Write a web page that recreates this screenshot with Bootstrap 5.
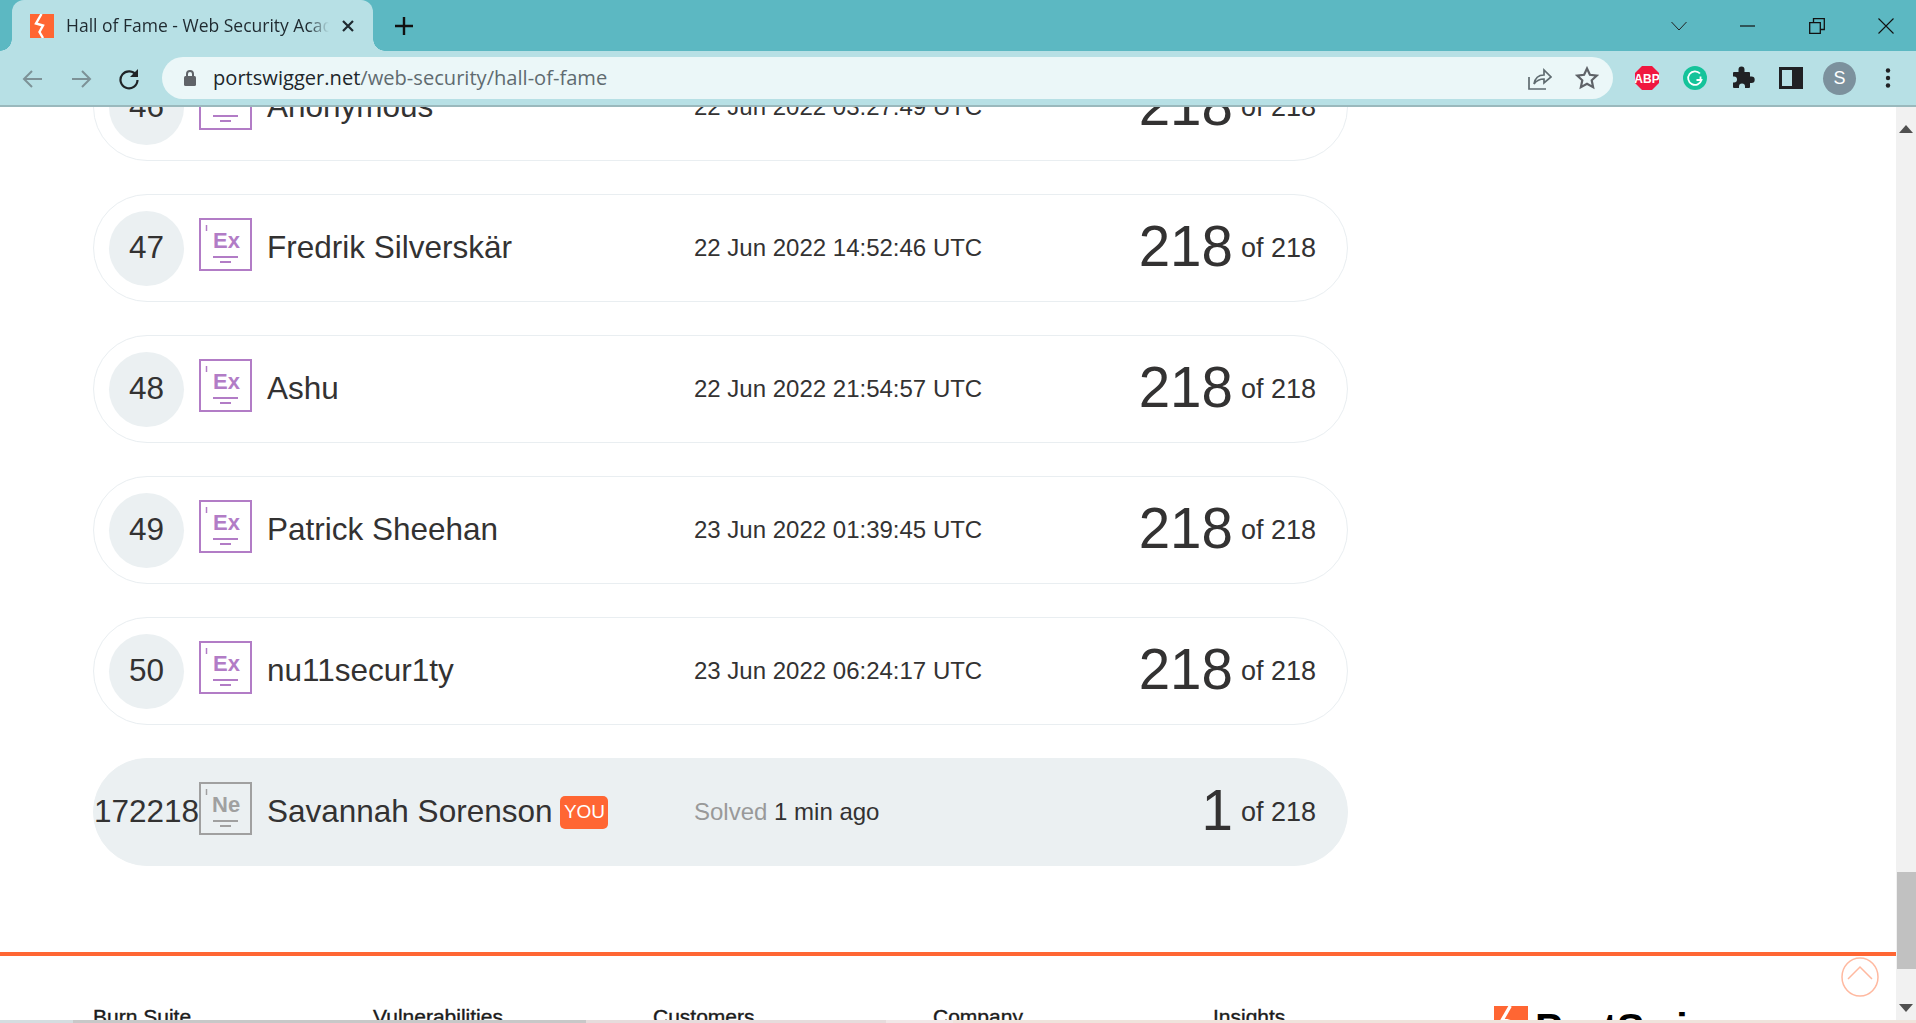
<!DOCTYPE html>
<html lang="en">

<head>
    <meta charset="UTF-8">
    <meta name="viewport" content="width=device-width, initial-scale=1.0">
    <title>Hall of Fame - Web Security Academy</title>
    <link href="https://cdn.jsdelivr.net/npm/bootstrap@5.3.3/dist/css/bootstrap.min.css" rel="stylesheet">
    <style>
        html, body { height: 100%; }
        body { overflow: hidden; background: #fff; color: #333232; font-family: "Liberation Sans", Arial, sans-serif; }

        /* browser chrome */
        .tabstrip { height: 51px; background: #5cb8c2; padding-left: 12px; font-family: "Open Sans", sans-serif; }
        .tab-item { width: 361px; height: 51px; background: #b7e0e5; border-radius: 12px 12px 0 0; padding-left: 18px; color: #1f2a30; }
        .tab-item::before, .tab-item::after { content: ""; position: absolute; bottom: 0; width: 12px; height: 12px; }
        .tab-item::before { left: -12px; background: radial-gradient(circle at 0 0, transparent 11.5px, #b7e0e5 12px); }
        .tab-item::after { right: -12px; background: radial-gradient(circle at 100% 0, transparent 11.5px, #b7e0e5 12px); }
        .tab-title { width: 263px; margin-left: 12px; font-size: 17.5px; white-space: nowrap; overflow: hidden; -webkit-mask-image: linear-gradient(90deg, #000 92%, transparent); mask-image: linear-gradient(90deg, #000 92%, transparent); }
        .tab-close { margin-left: 12px; }
        .newtab { margin-left: 22px; }
        .win-btns { margin-left: auto; padding-right: 22px; gap: 53px; }
        .toolbar { height: 56px; background: #b7e0e5; border-bottom: 2px solid #9ab9bd; padding: 6px 0 6px 22px; }
        .tool-ic { width: 48px; }
        .tool-ic-last { width: 44px; }
        .omnibox { width: 1451px; height: 42px; background: #ebf7f8; border-radius: 21px; padding: 0 14px 0 21px; font-family: "Open Sans", sans-serif; font-size: 20.1px; color: #5f6b70; }
        .url-host { color: #20262a; }
        .url-text { margin-left: 16px; white-space: nowrap; }
        .omni-right { margin-left: auto; gap: 23px; }
        .ext-bar { padding-left: 22px; gap: 24px; }
        .avatar-s { width: 33px; height: 33px; background: #7c919d; color: #fff; font-size: 18px; margin-left: -4px; margin-right: -4px; }

        /* page */
        .page-area { min-height: 0; }
        .page-scroll { min-width: 0; overflow: hidden; }
        .rank-list { margin-top: -54px; padding: 0 548px 0 93px; gap: 33px; }
        .rank-row { height: 108px; border: 1px solid #e9eef1; border-radius: 54px; padding-left: 15px; padding-right: 31px; }
        .rank-row.is-you { background: #ebf0f2; border-color: #ebf0f2; }
        .rank-num { width: 75px; height: 75px; background: #ebf0f2; font-size: 31.5px; white-space: nowrap; }
        .el-box { width: 53px; height: 53px; margin-left: 15px; margin-bottom: 8px; }
        .el-box rect, .el-box line { fill: none; stroke: #b27cc6; stroke-width: 2; }
        .el-box text { fill: #b27cc6; font: 700 22px "Liberation Sans", Arial, sans-serif; }
        .el-box .el-tick { stroke-width: 1.5; }
        .el-box.el-new rect, .el-box.el-new line { stroke: #a0a0a0; }
        .el-box.el-new text { fill: #a0a0a0; }
        .player-col { width: 442px; padding-left: 15px; font-size: 31.5px; white-space: nowrap; }
        .you-tag { background: #ff6633; color: #fff; font-size: 19px; width: 48px; height: 33px; margin-left: 8px; border-radius: 5px; }
        .when-col { font-size: 24px; white-space: nowrap; }
        .when-muted { color: #999; }
        .score-col { margin-left: auto; white-space: nowrap; }
        .score-big { font-size: 56.5px; line-height: 1; margin-right: 8px; margin-bottom: 2px; }
        .score-of { font-size: 27px; }

        .site-footer { margin-top: 86px; border-top: 4px solid #ff6633; padding: 49px 0 0 93px; }
        .foot-col { width: 280px; font-size: 21px; line-height: 24px; color: #1c1c1c; -webkit-text-stroke: .4px #1c1c1c; }
        .foot-logo { margin-left: 1px; margin-top: 1px; gap: 7px; color: #000; font-size: 41px; line-height: 44px; font-weight: 700; }

        .to-top { position: absolute; right: 37px; top: 850px; }

        .scroll-track { width: 20px; background: #f1f1f1; }
        .scroll-thumb { width: 19px; height: 97px; margin-left: 1px; background: #c1c1c1; margin-top: auto; }
        .scroll-btm { height: 51px; padding-bottom: 8px; }
        .scroll-top { padding-top: 9px; }

        .under-strip { height: 3px; background: #efe3dc; }
        .strip-a { width: 73px; background: #d5dde0; }
        .strip-b { width: 513px; background: #c8c8c8; }
        .strip-c { width: 300px; background: #e6dcdc; }
        .strip-d { width: 67px; background: #f1e8e8; }
    </style>
</head>

<body class="d-flex flex-column">

    <!-- title bar -->
    <div class="tabstrip d-flex align-items-center flex-shrink-0">
        <div class="tab-item position-relative d-flex align-items-center">
            <svg width="24" height="24" viewBox="0 0 24 24"><rect width="24" height="24" fill="#ff6633"/><path d="M11.5 0 6 9.5l7 2-3.5 6.5 3.5 6" fill="none" stroke="#fff" stroke-width="2.4"/></svg>
            <span class="tab-title">Hall of Fame - Web Security Academy</span>
            <svg class="tab-close" width="14" height="14" viewBox="0 0 14 14"><path d="M2 2l10 10M12 2 2 12" stroke="#1f2a30" stroke-width="2.2"/></svg>
        </div>
        <svg class="newtab" width="18" height="18" viewBox="0 0 18 18"><path d="M9 0v18M0 9h18" stroke="#111" stroke-width="2.4"/></svg>
        <div class="win-btns d-flex align-items-center">
            <svg width="16" height="10" viewBox="0 0 16 10"><path d="M.5 1 8 9l7.500-8" fill="none" stroke="#222" stroke-width="1"/></svg>
            <svg width="16" height="16" viewBox="0 0 16 16"><path d="M0 8h15" stroke="#111" stroke-width="1.2"/></svg>
            <svg width="16" height="16" viewBox="0 0 16 16"><path d="M.7 4.700h10.600v10.600H.7zM4.500 4.500V.7h10.800v10.800h-4" fill="none" stroke="#111" stroke-width="1.3"/></svg>
            <svg width="16" height="16" viewBox="0 0 16 16"><path d="M.5.500l15 15M15.500.500l-15 15" stroke="#111" stroke-width="1.1"/></svg>
        </div>
    </div>

    <!-- toolbar -->
    <div class="toolbar d-flex align-items-center flex-shrink-0">
        <div class="tool-ic"><svg width="22" height="20" viewBox="0 0 22 20"><path d="M20 10H3M10 2l-8 8 8 8" fill="none" stroke="#7d9297" stroke-width="2"/></svg></div>
        <div class="tool-ic"><svg width="22" height="20" viewBox="0 0 22 20"><path d="M2 10h17M12 2l8 8-8 8" fill="none" stroke="#7d9297" stroke-width="2"/></svg></div>
        <div class="tool-ic-last"><svg width="22" height="22" viewBox="0 0 22 22"><path d="M18.300 7.500A8.500 8.500 0 1 0 19.500 12" fill="none" stroke="#1f2326" stroke-width="2.200"/><path d="M20 1v8h-8z" fill="#1f2326"/></svg></div>
        <div class="omnibox d-flex align-items-center">
            <svg width="14" height="18" viewBox="0 0 14 18"><path d="M4 8V5a3 3 0 0 1 6 0v3" fill="none" stroke="#5f6368" stroke-width="2"/><rect x="1" y="7" width="12" height="10" rx="1.500" fill="#5f6368"/></svg>
            <span class="url-text"><span class="url-host">portswigger.net</span>/web-security/hall-of-fame</span>
            <div class="omni-right d-flex align-items-center">
                <svg width="24" height="24" viewBox="0 0 24 24"><path d="M1 11v12h17M6 18c1-6 5-9 10-9V4l7 7-7 6v-4c-4 0-7 1-10 5z" fill="none" stroke="#5f6b70" stroke-width="1.700"/></svg>
                <svg width="24" height="24" viewBox="0 0 24 24"><path d="m12 2.500 2.900 6.300 6.900.8-5.100 4.700 1.400 6.800-6.100-3.400-6.100 3.400 1.400-6.800-5.100-4.700 6.900-.8z" fill="none" stroke="#5f6368" stroke-width="2.200"/></svg>
            </div>
        </div>
        <div class="ext-bar d-flex align-items-center">
            <svg width="24" height="24" viewBox="0 0 24 24"><path d="M7 0h10l7 7v10l-7 7H7l-7-7V7z" fill="#f0173f"/><text x="12" y="16.500" text-anchor="middle" font-family="Liberation Sans, sans-serif" font-weight="700" font-size="12" fill="#fff">ABP</text></svg>
            <svg width="24" height="24" viewBox="0 0 24 24"><circle cx="12" cy="12" r="12" fill="#15c39a"/><path d="M17 7.500a6.800 6.800 0 1 0 1.500 6.500h-5" fill="none" stroke="#fff" stroke-width="1.800"/><path d="M17.500 10.500v3.500" stroke="#fff" stroke-width="1.800"/></svg>
            <svg width="24" height="24" viewBox="0 0 24 24"><path d="M7.500 3.500a3 3 0 0 1 6 0V6H18a1 1 0 0 1 1 1v3.500h1.500a3.200 3.200 0 0 1 0 6.400H19V21a1 1 0 0 1-1 1h-4v-1.500a3 3 0 0 0-6 0V22H3a1 1 0 0 1-1-1v-4.500h1a3 3 0 0 0 0-6H2V7a1 1 0 0 1 1-1h4.500z" fill="#202124"/></svg>
            <svg width="24" height="24" viewBox="0 0 24 24"><path d="M1.500 2.500h21v19h-21z" fill="none" stroke="#202124" stroke-width="3"/><path d="M13 2.500h9.500v19H13z" fill="#202124"/></svg>
            <div class="avatar-s rounded-circle d-flex align-items-center justify-content-center">S</div>
            <svg width="24" height="24" viewBox="0 0 24 24"><circle cx="12" cy="4.500" r="2.200" fill="#202124"/><circle cx="12" cy="12" r="2.200" fill="#202124"/><circle cx="12" cy="19.500" r="2.200" fill="#202124"/></svg>
        </div>
    </div>

    <!-- page -->
    <div class="page-area d-flex flex-grow-1 position-relative">
        <div class="page-scroll flex-grow-1">
            <div class="rank-list d-flex flex-column">

                <div class="rank-row d-flex align-items-center">
                    <div class="rank-num rounded-circle d-flex align-items-center justify-content-center flex-shrink-0">46</div>
                    <svg class="el-box flex-shrink-0" viewBox="0 0 53 53"><rect x="1" y="1" width="51" height="51"/><line class="el-tick" x1="7.500" y1="7" x2="7.500" y2="13"/><text x="14" y="30">Ex</text><line x1="14" y1="39" x2="39" y2="39"/><line x1="21" y1="44" x2="32" y2="44"/></svg>
                    <div class="player-col d-flex align-items-center">Anonymous</div>
                    <div class="when-col">22 Jun 2022 03:27:49 UTC</div>
                    <div class="score-col d-flex align-items-center"><span class="score-big">218</span><span class="score-of">of 218</span></div>
                </div>

                <div class="rank-row d-flex align-items-center">
                    <div class="rank-num rounded-circle d-flex align-items-center justify-content-center flex-shrink-0">47</div>
                    <svg class="el-box flex-shrink-0" viewBox="0 0 53 53"><rect x="1" y="1" width="51" height="51"/><line class="el-tick" x1="7.500" y1="7" x2="7.500" y2="13"/><text x="14" y="30">Ex</text><line x1="14" y1="39" x2="39" y2="39"/><line x1="21" y1="44" x2="32" y2="44"/></svg>
                    <div class="player-col d-flex align-items-center">Fredrik Silverskär</div>
                    <div class="when-col">22 Jun 2022 14:52:46 UTC</div>
                    <div class="score-col d-flex align-items-center"><span class="score-big">218</span><span class="score-of">of 218</span></div>
                </div>

                <div class="rank-row d-flex align-items-center">
                    <div class="rank-num rounded-circle d-flex align-items-center justify-content-center flex-shrink-0">48</div>
                    <svg class="el-box flex-shrink-0" viewBox="0 0 53 53"><rect x="1" y="1" width="51" height="51"/><line class="el-tick" x1="7.500" y1="7" x2="7.500" y2="13"/><text x="14" y="30">Ex</text><line x1="14" y1="39" x2="39" y2="39"/><line x1="21" y1="44" x2="32" y2="44"/></svg>
                    <div class="player-col d-flex align-items-center">Ashu</div>
                    <div class="when-col">22 Jun 2022 21:54:57 UTC</div>
                    <div class="score-col d-flex align-items-center"><span class="score-big">218</span><span class="score-of">of 218</span></div>
                </div>

                <div class="rank-row d-flex align-items-center">
                    <div class="rank-num rounded-circle d-flex align-items-center justify-content-center flex-shrink-0">49</div>
                    <svg class="el-box flex-shrink-0" viewBox="0 0 53 53"><rect x="1" y="1" width="51" height="51"/><line class="el-tick" x1="7.500" y1="7" x2="7.500" y2="13"/><text x="14" y="30">Ex</text><line x1="14" y1="39" x2="39" y2="39"/><line x1="21" y1="44" x2="32" y2="44"/></svg>
                    <div class="player-col d-flex align-items-center">Patrick Sheehan</div>
                    <div class="when-col">23 Jun 2022 01:39:45 UTC</div>
                    <div class="score-col d-flex align-items-center"><span class="score-big">218</span><span class="score-of">of 218</span></div>
                </div>

                <div class="rank-row d-flex align-items-center">
                    <div class="rank-num rounded-circle d-flex align-items-center justify-content-center flex-shrink-0">50</div>
                    <svg class="el-box flex-shrink-0" viewBox="0 0 53 53"><rect x="1" y="1" width="51" height="51"/><line class="el-tick" x1="7.500" y1="7" x2="7.500" y2="13"/><text x="14" y="30">Ex</text><line x1="14" y1="39" x2="39" y2="39"/><line x1="21" y1="44" x2="32" y2="44"/></svg>
                    <div class="player-col d-flex align-items-center">nu11secur1ty</div>
                    <div class="when-col">23 Jun 2022 06:24:17 UTC</div>
                    <div class="score-col d-flex align-items-center"><span class="score-big">218</span><span class="score-of">of 218</span></div>
                </div>

                <div class="rank-row is-you d-flex align-items-center">
                    <div class="rank-num rounded-circle d-flex align-items-center justify-content-center flex-shrink-0">172218</div>
                    <svg class="el-box el-new flex-shrink-0" viewBox="0 0 53 53"><rect x="1" y="1" width="51" height="51"/><line class="el-tick" x1="7.500" y1="7" x2="7.500" y2="13"/><text x="13" y="30">Ne</text><line x1="14" y1="39" x2="39" y2="39"/><line x1="21" y1="44" x2="32" y2="44"/></svg>
                    <div class="player-col d-flex align-items-center">Savannah Sorenson<span class="you-tag d-flex align-items-center justify-content-center">YOU</span></div>
                    <div class="when-col"><span class="when-muted">Solved</span> 1 min ago</div>
                    <div class="score-col d-flex align-items-center"><span class="score-big">1</span><span class="score-of">of 218</span></div>
                </div>

            </div>

            <footer class="site-footer d-flex">
                <div class="foot-col">Burn Suite</div>
                <div class="foot-col">Vulnerabilities</div>
                <div class="foot-col">Customers</div>
                <div class="foot-col">Company</div>
                <div class="foot-col">Insights</div>
                <div class="foot-logo d-flex align-items-start">
                    <svg width="34" height="34" viewBox="0 0 24 24"><rect width="24" height="24" fill="#ff6633"/><path d="M11.500 0 6 9.500l7 2-3.500 6.500 3.500 6" fill="none" stroke="#fff" stroke-width="2.400"/></svg>
                    <span>PortSwigger</span>
                </div>
            </footer>
        </div>

        <svg class="to-top" width="38" height="40" viewBox="0 0 38 40"><ellipse cx="19" cy="20" rx="18" ry="19" fill="#fff" stroke="#ffb9a0" stroke-width="1.500"/><path d="M7 22 19 10l12 12" fill="none" stroke="#ffb9a0" stroke-width="1.500"/></svg>

        <div class="scroll-track d-flex flex-column align-items-center flex-shrink-0">
            <div class="scroll-top"><svg width="14" height="8" viewBox="0 0 14 8"><path d="M7 0l7 8H0z" fill="#505050"/></svg></div>
            <div class="scroll-thumb"></div>
            <div class="scroll-btm d-flex align-items-end"><svg width="14" height="8" viewBox="0 0 14 8"><path d="M7 8 14 0H0z" fill="#505050"/></svg></div>
        </div>
    </div>

    <div class="under-strip d-flex flex-shrink-0">
        <div class="strip-a"></div>
        <div class="strip-b"></div>
        <div class="strip-c"></div>
        <div class="strip-d"></div>
    </div>

    <script src="https://cdn.jsdelivr.net/npm/bootstrap@5.3.3/dist/js/bootstrap.bundle.min.js"></script>
</body>

</html>
